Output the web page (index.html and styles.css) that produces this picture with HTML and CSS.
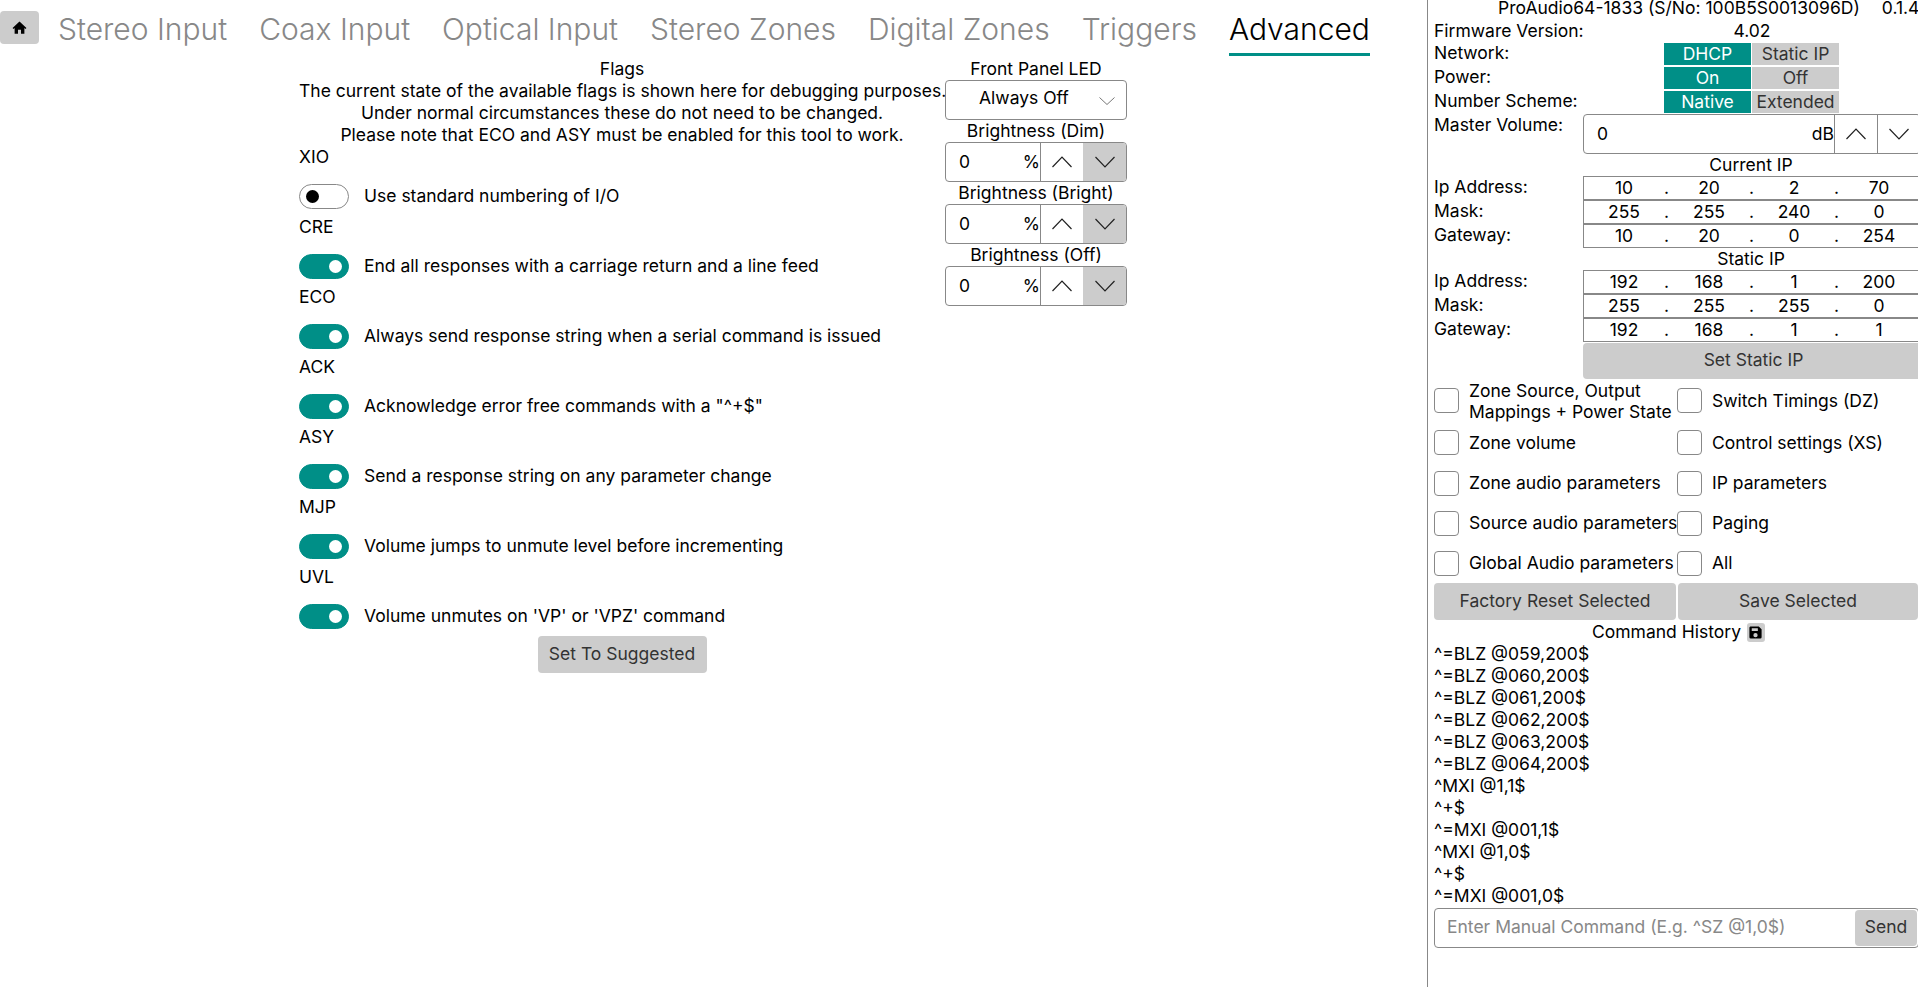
FILE: index.html
```html
<!DOCTYPE html>
<html lang="en">
<head>
<meta charset="utf-8">
<title>ProAudio64</title>
<link rel="stylesheet" href="styles.css">
</head>
<body>
<div class="app">
  <main class="main">
    <nav class="tabs">
      <button class="home" type="button" aria-label="Home">
        <svg viewBox="0 0 16 16" class="home-icon"><path d="M8 1.600 15.400 8.400 14.400 9.500 13.200 8.400V14.600H9.600V10.400H6.400V14.600H2.800V8.400L1.600 9.500.6 8.400Z"/></svg>
      </button>
      <a class="tab">Stereo Input</a>
      <a class="tab">Coax Input</a>
      <a class="tab">Optical Input</a>
      <a class="tab">Stereo Zones</a>
      <a class="tab">Digital Zones</a>
      <a class="tab">Triggers</a>
      <a class="tab active">Advanced</a>
    </nav>
    <div class="content">
      <section class="flags">
        <div class="center">Flags</div>
        <div class="center">The current state of the available flags is shown here for debugging purposes.</div>
        <div class="center">Under normal circumstances these do not need to be changed.</div>
        <div class="center">Please note that ECO and ASY must be enabled for this tool to work.</div>
        <div class="flag"><div>XIO</div><div class="flag-row"><span class="switch"></span><span class="flag-text">Use standard numbering of I/O</span></div></div>
        <div class="flag"><div>CRE</div><div class="flag-row"><span class="switch on"></span><span class="flag-text">End all responses with a carriage return and a line feed</span></div></div>
        <div class="flag"><div>ECO</div><div class="flag-row"><span class="switch on"></span><span class="flag-text">Always send response string when a serial command is issued</span></div></div>
        <div class="flag"><div>ACK</div><div class="flag-row"><span class="switch on"></span><span class="flag-text">Acknowledge error free commands with a "^+$"</span></div></div>
        <div class="flag"><div>ASY</div><div class="flag-row"><span class="switch on"></span><span class="flag-text">Send a response string on any parameter change</span></div></div>
        <div class="flag"><div>MJP</div><div class="flag-row"><span class="switch on"></span><span class="flag-text">Volume jumps to unmute level before incrementing</span></div></div>
        <div class="flag"><div>UVL</div><div class="flag-row"><span class="switch on"></span><span class="flag-text">Volume unmutes on 'VP' or 'VPZ' command</span></div></div>
        <div class="suggest-wrap"><button class="btn suggest" type="button">Set To Suggested</button></div>
      </section>
      <section class="led">
        <div class="center">Front Panel LED</div>
        <div class="select"><span class="select-text">Always Off</span>
          <svg class="select-chev" viewBox="0 0 16 16"><path d="M.5 4.500 8 11.500 15.500 4.500"/></svg></div>
        <div class="center">Brightness (Dim)</div>
        <div class="spin"><span class="spin-val">0</span><span class="spin-unit">%</span>
          <span class="spin-btn"><svg class="chev" viewBox="0 0 20 20"><path d="M.5 15 10 5l9.500 10"/></svg></span>
          <span class="spin-btn gray"><svg class="chev" viewBox="0 0 20 20"><path d="M.5 5 10 15l9.500-10"/></svg></span></div>
        <div class="center">Brightness (Bright)</div>
        <div class="spin"><span class="spin-val">0</span><span class="spin-unit">%</span>
          <span class="spin-btn"><svg class="chev" viewBox="0 0 20 20"><path d="M.5 15 10 5l9.500 10"/></svg></span>
          <span class="spin-btn gray"><svg class="chev" viewBox="0 0 20 20"><path d="M.5 5 10 15l9.500-10"/></svg></span></div>
        <div class="center">Brightness (Off)</div>
        <div class="spin"><span class="spin-val">0</span><span class="spin-unit">%</span>
          <span class="spin-btn"><svg class="chev" viewBox="0 0 20 20"><path d="M.5 15 10 5l9.500 10"/></svg></span>
          <span class="spin-btn gray"><svg class="chev" viewBox="0 0 20 20"><path d="M.5 5 10 15l9.500-10"/></svg></span></div>
      </section>
    </div>
  </main>
  <aside class="panel">
    <div class="title"><span>ProAudio64-1833 (S/No: 100B5S0013096D)</span><span>0.1.4</span></div>
    <div class="fw"><span>Firmware Version:</span><span class="fw-val">4.02</span></div>
    <div class="opt"><span>Network:</span><div class="seg"><span class="seg-on">DHCP</span><span class="seg-off">Static IP</span></div></div>
    <div class="opt"><span>Power:</span><div class="seg"><span class="seg-on">On</span><span class="seg-off">Off</span></div></div>
    <div class="opt"><span>Number Scheme:</span><div class="seg"><span class="seg-on">Native</span><span class="seg-off">Extended</span></div></div>
    <div class="vol"><span class="vol-label">Master Volume:</span>
      <div class="spin wide"><span class="spin-val">0</span><span class="spin-unit">dB</span>
        <span class="spin-btn"><svg class="chev" viewBox="0 0 20 20"><path d="M.5 15 10 5l9.500 10"/></svg></span>
        <span class="spin-btn"><svg class="chev" viewBox="0 0 20 20"><path d="M.5 5 10 15l9.500-10"/></svg></span></div>
    </div>
    <div class="ip-title">Current IP</div>
    <div class="ip-group">
      <div class="ip-row"><span>Ip Address:</span><div class="ip"><b>10</b><i>.</i><b>20</b><i>.</i><b>2</b><i>.</i><b>70</b></div></div>
      <div class="ip-row"><span>Mask:</span><div class="ip"><b>255</b><i>.</i><b>255</b><i>.</i><b>240</b><i>.</i><b>0</b></div></div>
      <div class="ip-row"><span>Gateway:</span><div class="ip"><b>10</b><i>.</i><b>20</b><i>.</i><b>0</b><i>.</i><b>254</b></div></div>
    </div>
    <div class="ip-title">Static IP</div>
    <div class="ip-group">
      <div class="ip-row"><span>Ip Address:</span><div class="ip"><b>192</b><i>.</i><b>168</b><i>.</i><b>1</b><i>.</i><b>200</b></div></div>
      <div class="ip-row"><span>Mask:</span><div class="ip"><b>255</b><i>.</i><b>255</b><i>.</i><b>255</b><i>.</i><b>0</b></div></div>
      <div class="ip-row"><span>Gateway:</span><div class="ip"><b>192</b><i>.</i><b>168</b><i>.</i><b>1</b><i>.</i><b>1</b></div></div>
    </div>
    <div class="set-wrap"><button class="btn set" type="button">Set Static IP</button></div>
    <div class="checks">
      <label class="check"><span class="box"></span><span>Zone Source, Output Mappings + Power State</span></label>
      <label class="check"><span class="box"></span><span>Switch Timings (DZ)</span></label>
      <label class="check"><span class="box"></span><span>Zone volume</span></label>
      <label class="check"><span class="box"></span><span>Control settings (XS)</span></label>
      <label class="check raise"><span class="box"></span><span>Zone audio parameters</span></label>
      <label class="check raise"><span class="box"></span><span>IP parameters</span></label>
      <label class="check raise"><span class="box"></span><span class="nowrap">Source audio parameters</span></label>
      <label class="check raise"><span class="box"></span><span>Paging</span></label>
      <label class="check raise"><span class="box"></span><span class="nowrap">Global Audio parameters</span></label>
      <label class="check raise"><span class="box"></span><span>All</span></label>
    </div>
    <div class="actions"><button class="btn" type="button">Factory Reset Selected</button><button class="btn" type="button">Save Selected</button></div>
    <div class="hist-title">Command History <span class="save"><svg viewBox="0 0 16 16" class="save-icon"><path fill-rule="evenodd" d="M2.500 1.500H11.500L14.500 4.500V13a1.500 1.500 0 0 1-1.500 1.500H3A1.500 1.500 0 0 1 1.500 13V3A1.500 1.500 0 0 1 2.500 1.500ZM4 3.500V6.500H10.500V3.500ZM8 8.500A2.300 2.300 0 1 0 8 13.100 2.300 2.300 0 0 0 8 8.500Z"/></svg></span></div>
    <div class="history">
      <div>^=BLZ @059,200$</div>
      <div>^=BLZ @060,200$</div>
      <div>^=BLZ @061,200$</div>
      <div>^=BLZ @062,200$</div>
      <div>^=BLZ @063,200$</div>
      <div>^=BLZ @064,200$</div>
      <div>^MXI @1,1$</div>
      <div>^+$</div>
      <div>^=MXI @001,1$</div>
      <div>^MXI @1,0$</div>
      <div>^+$</div>
      <div>^=MXI @001,0$</div>
    </div>
    <div class="cmd"><span class="placeholder">Enter Manual Command (E.g. ^SZ @1,0$)</span><button class="btn send" type="button">Send</button></div>
  </aside>
</div>
</body>
</html>
```
FILE: styles.css
```css
html, body { margin: 0; height: 100%; overflow: hidden; background: #fff; }
body { font-family: Inter, "Liberation Sans", sans-serif; font-size: 17.500px; line-height: 22px; color: #000; }
.app { display: flex; height: 987px; }
.main { width: 1427px; flex: none; }
.center { text-align: center; white-space: nowrap; }
.btn { font: inherit; line-height: 22px; color: #333; background: #ccc; border: 0; border-radius: 4px; padding: 0 0 2px; box-sizing: border-box; }

.tabs { display: flex; align-items: flex-start; height: 58px; }
.home { width: 39px; height: 33px; margin-top: 11px; padding: 0; border: 0; border-radius: 4px; background: #ccc; display: flex; align-items: center; justify-content: center; }
.home-icon { width: 15px; height: 15px; fill: #000; }
.tab { margin-left: 19px; margin-right: 13px; padding-top: 11px; height: 43px; font-size: 30px; line-height: 36px; font-weight: 300; color: #888; box-sizing: border-box; white-space: nowrap; }
.tab.active { color: #000; height: 56px; border-bottom: 3px solid #008f87; padding-bottom: 8px; }

.content { display: flex; padding-left: 299px; }
.flags { width: 646px; flex: none; }
.flag { height: 70px; }
.flag-row { display: flex; gap: 15px; margin-top: 16px; height: 25px; line-height: 22px; }
.flag-text { padding-top: 1px; }
.switch { width: 50px; height: 25px; flex: none; box-sizing: border-box; border: 1px solid #888; border-radius: 13px; display: flex; align-items: center; padding: 0 6px; background: #fff; }
.switch::after { content: ""; width: 13px; height: 13px; border-radius: 50%; background: #000; }
.switch.on { background: #008f87; border-color: #008f87; justify-content: flex-end; }
.switch.on::after { background: #fff; }
.suggest-wrap { display: flex; justify-content: center; }
.suggest { width: 169px; height: 37px; }

.led { width: 182px; flex: none; }
.select { height: 40px; box-sizing: border-box; border: 1px solid #888; border-radius: 4px; display: flex; align-items: center; padding-left: 33px; }
.select-text { padding-bottom: 4px; }
.select-chev { width: 16px; height: 16px; margin-left: auto; margin-right: 11px; margin-top: 2px; fill: none; stroke: #777; stroke-width: 1; }
.spin { height: 40px; box-sizing: border-box; border: 1px solid #888; border-radius: 4px; display: flex; align-items: center; overflow: hidden; }
.spin-val { padding-left: 13px; flex: 1; }
.spin-btn { width: 43px; height: 100%; flex: none; display: flex; align-items: center; justify-content: center; border-left: 1px solid #888; box-sizing: border-box; }
.spin-btn.gray { background: #ccc; border-left: 0; }
.chev { width: 20px; height: 20px; fill: none; stroke: #222; stroke-width: 1.200; }

.panel { width: 491px; flex: none; box-sizing: border-box; border-left: 1px solid #888; padding-left: 6px; overflow: hidden; }
.title { display: flex; margin-top: -3px; height: 23px; padding-left: 64px; gap: 22px; white-space: nowrap; }
.fw { display: flex; height: 22px; }
.fw span:first-child { width: 230px; }
.fw-val { width: 176px; text-align: center; }
.opt { display: flex; height: 24px; }
.opt > span { width: 230px; flex: none; }
.seg { display: flex; gap: 1px; margin-top: 1px; height: 22px; }
.seg span { width: 87px; text-align: center; line-height: 22px; }
.seg-on { background: #008f87; color: #fff; }
.seg-off { background: #ccc; color: #333; }
.vol { display: flex; height: 40px; }
.vol-label { width: 149px; flex: none; }
.spin.wide { width: 338px; flex: none; }
.ip-title { width: 636px; margin-left: -1px; text-align: center; height: 22px; }
.ip-row { display: flex; height: 24px; }
.ip-row > span { width: 149px; flex: none; line-height: 22px; }
.ip { width: 345px; flex: none; box-sizing: border-box; border: 1px solid #888; padding-left: 5px; display: flex; height: 24px; line-height: 22px; }
.ip-row .ip b { font-weight: 400; width: 70px; text-align: center; }
.ip-row .ip i { font-style: normal; width: 15px; text-align: center; }
.ip-group { height: 72px; }
.set-wrap { margin-left: 149px; padding-top: 1px; }
.set { width: 341px; height: 36px; }
.checks { display: grid; grid-template-columns: 243px 241px; grid-template-rows: 41px 42px 40px 40px 40px; margin-top: 1px; }
.check { display: flex; align-items: center; gap: 10px; line-height: 21px; }
.check.raise span:last-child { padding-bottom: 2px; }
.box { width: 25px; height: 25px; flex: none; box-sizing: border-box; border: 1px solid #888; border-radius: 4px; }
.nowrap { white-space: nowrap; }
.actions { display: grid; grid-template-columns: 242px 240px; gap: 2px; }
.actions .btn { height: 37px; }
.hist-title { display: flex; justify-content: center; align-items: center; gap: 6px; height: 22px; margin-top: 1px; padding-left: 5px; }
.save { width: 18px; height: 19px; background: #ccc; border-radius: 3px; display: flex; align-items: center; justify-content: center; }
.save-icon { width: 15px; height: 15px; fill: #000; }
.history div { height: 22px; }
.cmd { display: flex; align-items: center; width: 485px; height: 40px; box-sizing: border-box; border: 1px solid #888; border-radius: 4px; margin-top: 1px; padding: 0 1px 0 12px; }
.placeholder { color: #888; flex: 1; padding-bottom: 2px; }
.send { width: 62px; height: 36px; flex: none; }
```
